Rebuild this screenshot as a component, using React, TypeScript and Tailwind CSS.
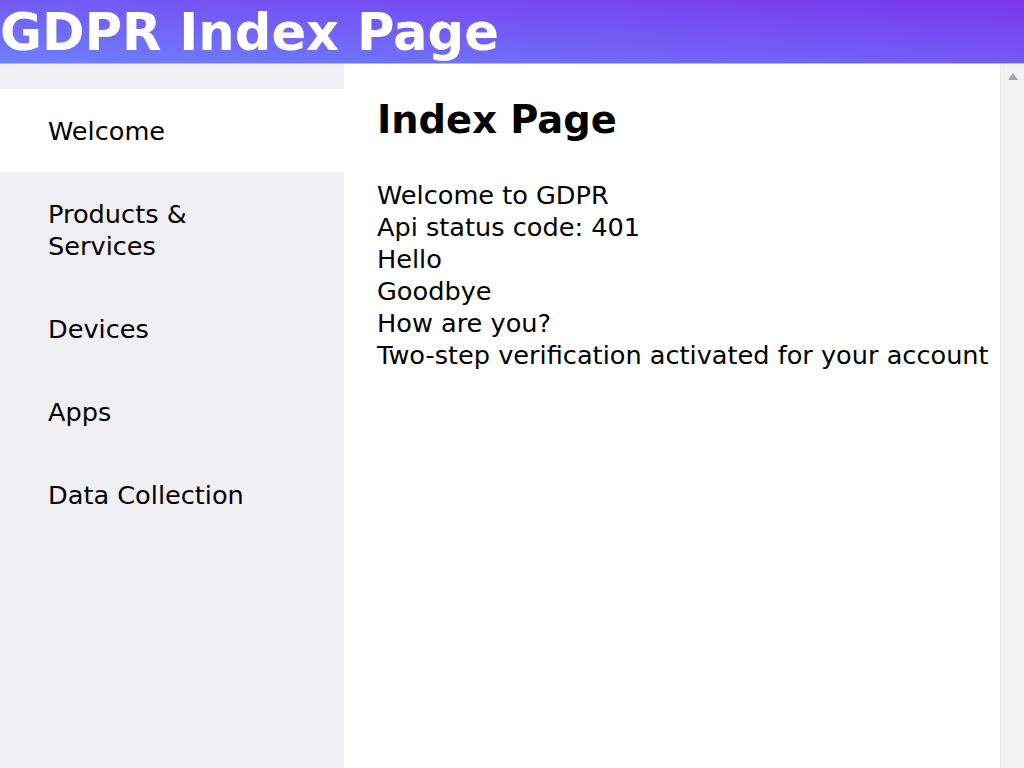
import React from 'react'

const navItems = ['Welcome', 'Products & Services', 'Devices', 'Apps', 'Data Collection']

const lines = [
    'Welcome to GDPR',
    'Api status code: 401',
    'Hello',
    'Goodbye',
    'How are you?',
    'Two-step verification activated for your account',
]

export default function App() {
    return (
        <div className="flex h-screen flex-col overflow-hidden font-['DejaVu_Sans',sans-serif] text-black">
            {/* header */}
            <header className="h-16 shrink-0 border-b border-[#b9b6fb] bg-[linear-gradient(to_top_right,#6d80fc,#7a36ee)]">
                <h1 className="m-0 -mt-[6px] text-[51.2px] font-bold leading-normal text-white">GDPR Index Page</h1>
            </header>

            <div className="flex min-h-0 flex-1">
                {/* side nav */}
                <aside className="w-[344px] shrink-0 bg-[#f0eff4] pt-[25px]">
                    <ul>
                        {navItems.map((item, i) => (
                            <li
                                key={item}
                                className={
                                    (i === 0 ? 'bg-white ' : '') +
                                    'py-[25.5px] pl-12 pr-[100px] text-[25.6px] leading-8'
                                }
                            >
                                {item}
                            </li>
                        ))}
                    </ul>
                </aside>

                {/* main content */}
                <main className="min-w-0 flex-1 overflow-hidden bg-white pl-[33px] pt-[27px]">
                    <h2 className="m-0 text-[38.4px] font-bold leading-normal">Index Page</h2>
                    <div className="mt-[30px] text-[25.6px] leading-8">
                        {lines.map((line) => (
                            <p key={line} className="whitespace-nowrap">
                                {line}
                            </p>
                        ))}
                    </div>
                </main>

                {/* scrollbar track */}
                <div className="flex w-6 shrink-0 justify-center border-l border-[#e9e9e9] bg-[#f1f1f1] pt-[9px]">
                    <svg width="10" height="7" viewBox="0 0 10 7">
                        <path d="M5 0 L10 7 L0 7 Z" fill="#a3a3a3" />
                    </svg>
                </div>
            </div>
        </div>
    )
}
